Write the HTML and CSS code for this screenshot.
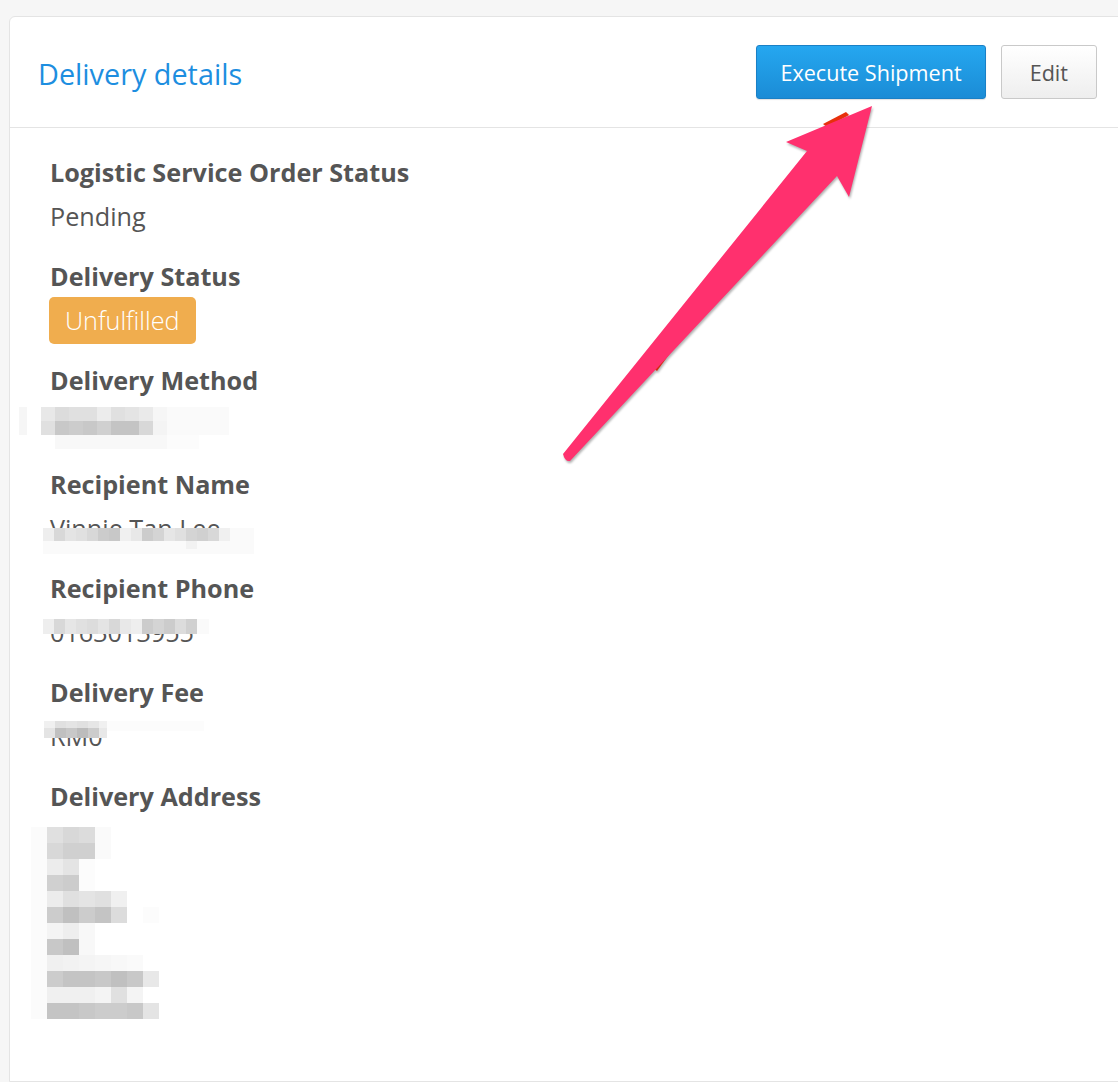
FILE: index.html
```html
<!DOCTYPE html>
<html>
<head lang="en">
    <meta charset="UTF-8">
    <title>Delivery details</title>
    <link rel="stylesheet" href="styles.css">
</head>
<body>
    <div class="panel">
        <div class="panel-heading">
            <h3 class="panel-title">Delivery details</h3>
            <div class="actions">
                <button class="btn btn-primary">Execute Shipment</button>
                <button class="btn btn-default">Edit</button>
            </div>
        </div>
        <div class="panel-body">
            <dl class="details">
                <div class="field">
                    <dt>Logistic Service Order Status</dt>
                    <dd>Pending</dd>
                </div>
                <div class="field">
                    <dt>Delivery Status</dt>
                    <dd class="status"><span class="label-warning">Unfulfilled</span></dd>
                </div>
                <div class="field">
                    <dt>Delivery Method</dt>
                    <dd class="redacted">
                        <!-- pixelated value -->
                        <svg class="mosaic mosaic-method" width="210" height="42" shape-rendering="crispEdges">
                            <rect x="0" y="0" width="8" height="28" fill="#f6f6f6"/>
                            <rect x="22" y="0" width="14" height="14" fill="#e8e8e8"/>
                            <rect x="36" y="0" width="14" height="14" fill="#dcdcdc"/>
                            <rect x="50" y="0" width="14" height="14" fill="#e0e0e0"/>
                            <rect x="64" y="0" width="14" height="14" fill="#e0e0e0"/>
                            <rect x="78" y="0" width="14" height="14" fill="#ececec"/>
                            <rect x="92" y="0" width="14" height="14" fill="#e0e0e0"/>
                            <rect x="106" y="0" width="14" height="14" fill="#e4e4e4"/>
                            <rect x="120" y="0" width="14" height="14" fill="#eaeaea"/>
                            <rect x="134" y="0" width="14" height="14" fill="#f6f6f6"/>
                            <rect x="148" y="0" width="62" height="14" fill="#fafafa"/>
                            <rect x="22" y="14" width="14" height="14" fill="#e0e0e0"/>
                            <rect x="36" y="14" width="14" height="14" fill="#c8c8c8"/>
                            <rect x="50" y="14" width="14" height="14" fill="#cccccc"/>
                            <rect x="64" y="14" width="14" height="14" fill="#c8c8c8"/>
                            <rect x="78" y="14" width="14" height="14" fill="#d0d0d0"/>
                            <rect x="92" y="14" width="14" height="14" fill="#c4c4c4"/>
                            <rect x="106" y="14" width="14" height="14" fill="#c4c4c4"/>
                            <rect x="120" y="14" width="14" height="14" fill="#d8d8d8"/>
                            <rect x="134" y="14" width="14" height="14" fill="#f4f4f4"/>
                            <rect x="148" y="14" width="62" height="14" fill="#fafafa"/>
                            <rect x="36" y="28" width="112" height="14" fill="#f8f8f8"/>
                            <rect x="148" y="28" width="32" height="14" fill="#fcfcfc"/>
                        </svg>
                    </dd>
                </div>
                <div class="field">
                    <dt>Recipient Name</dt>
                    <dd class="redacted">Vinnie Tan Lee
                        <svg class="mosaic mosaic-name" width="211" height="26" shape-rendering="crispEdges">
                            <rect x="0" y="0" width="11" height="13" fill="#eeeeee"/>
                            <rect x="11" y="0" width="11" height="13" fill="#d8d8d8"/>
                            <rect x="22" y="0" width="11" height="13" fill="#e4e4e4"/>
                            <rect x="33" y="0" width="11" height="13" fill="#e0e0e0"/>
                            <rect x="44" y="0" width="11" height="13" fill="#d8d8d8"/>
                            <rect x="55" y="0" width="11" height="13" fill="#cccccc"/>
                            <rect x="66" y="0" width="11" height="13" fill="#c8c8c8"/>
                            <rect x="77" y="0" width="11" height="13" fill="#f0f0f0"/>
                            <rect x="88" y="0" width="11" height="13" fill="#e8e8e8"/>
                            <rect x="99" y="0" width="11" height="13" fill="#cccccc"/>
                            <rect x="110" y="0" width="11" height="13" fill="#d4d4d4"/>
                            <rect x="121" y="0" width="11" height="13" fill="#e6e6e6"/>
                            <rect x="132" y="0" width="11" height="13" fill="#e0e0e0"/>
                            <rect x="143" y="0" width="11" height="13" fill="#d4d4d4"/>
                            <rect x="154" y="0" width="11" height="13" fill="#d0d0d0"/>
                            <rect x="165" y="0" width="11" height="13" fill="#d8d8d8"/>
                            <rect x="176" y="0" width="11" height="13" fill="#f0f0f0"/>
                            <rect x="187" y="0" width="24" height="13" fill="#fafafa"/>
                            <rect x="0" y="13" width="211" height="13" fill="#fafafa"/>
                            <rect x="143" y="13" width="11" height="8" fill="#f2f2f2"/>
                        </svg>
                    </dd>
                </div>
                <div class="field">
                    <dt>Recipient Phone</dt>
                    <dd class="redacted">0163013955
                        <svg class="mosaic mosaic-phone" width="166" height="15" shape-rendering="crispEdges">
                            <rect x="0" y="0" width="11" height="15" fill="#eeeeee"/>
                            <rect x="11" y="0" width="11" height="15" fill="#d8d8d8"/>
                            <rect x="22" y="0" width="11" height="15" fill="#e6e6e6"/>
                            <rect x="33" y="0" width="11" height="15" fill="#e0e0e0"/>
                            <rect x="44" y="0" width="11" height="15" fill="#dcdcdc"/>
                            <rect x="55" y="0" width="11" height="15" fill="#e4e4e4"/>
                            <rect x="66" y="0" width="11" height="15" fill="#d8d8d8"/>
                            <rect x="77" y="0" width="11" height="15" fill="#e8e8e8"/>
                            <rect x="88" y="0" width="11" height="15" fill="#eeeeee"/>
                            <rect x="99" y="0" width="11" height="15" fill="#cccccc"/>
                            <rect x="110" y="0" width="11" height="15" fill="#d4d4d4"/>
                            <rect x="121" y="0" width="11" height="15" fill="#cccccc"/>
                            <rect x="132" y="0" width="11" height="15" fill="#dcdcdc"/>
                            <rect x="143" y="0" width="11" height="15" fill="#d0d0d0"/>
                            <rect x="154" y="0" width="12" height="15" fill="#fafafa"/>
                        </svg>
                    </dd>
                </div>
                <div class="field">
                    <dt>Delivery Fee</dt>
                    <dd class="redacted">RM0
                        <svg class="mosaic mosaic-fee" width="160" height="17" shape-rendering="crispEdges">
                            <rect x="0" y="0" width="11" height="7" fill="#f0f0f0"/>
                            <rect x="11" y="0" width="11" height="7" fill="#e0e0e0"/>
                            <rect x="22" y="0" width="11" height="7" fill="#e4e4e4"/>
                            <rect x="33" y="0" width="11" height="7" fill="#e0e0e0"/>
                            <rect x="44" y="0" width="11" height="7" fill="#e6e6e6"/>
                            <rect x="55" y="0" width="8" height="7" fill="#f0f0f0"/>
                            <rect x="0" y="7" width="11" height="10" fill="#e4e4e4"/>
                            <rect x="11" y="7" width="11" height="10" fill="#c0c0c0"/>
                            <rect x="22" y="7" width="11" height="10" fill="#c8c8c8"/>
                            <rect x="33" y="7" width="11" height="10" fill="#bcbcbc"/>
                            <rect x="44" y="7" width="11" height="10" fill="#cccccc"/>
                            <rect x="55" y="7" width="8" height="10" fill="#e8e8e8"/>
                            <rect x="63" y="0" width="97" height="10" fill="#fcfcfc"/>
                        </svg>
                    </dd>
                </div>
                <div class="field">
                    <dt>Delivery Address</dt>
                    <dd class="redacted address">
                        <svg class="mosaic mosaic-address" width="130" height="192" shape-rendering="crispEdges">
                            <rect x="0" y="0" width="16" height="192" fill="#fbfbfb"/>
                            <!-- row 1 -->
                            <rect x="16" y="0" width="16" height="16" fill="#e0e0e0"/>
                            <rect x="32" y="0" width="16" height="16" fill="#d8d8d8"/>
                            <rect x="48" y="0" width="16" height="16" fill="#dcdcdc"/>
                            <rect x="64" y="0" width="16" height="32" fill="#fafafa"/>
                            <rect x="16" y="16" width="16" height="16" fill="#d8d8d8"/>
                            <rect x="32" y="16" width="16" height="16" fill="#d0d0d0"/>
                            <rect x="48" y="16" width="16" height="16" fill="#d0d0d0"/>
                            <!-- row 2 -->
                            <rect x="16" y="32" width="16" height="16" fill="#ececec"/>
                            <rect x="32" y="32" width="16" height="16" fill="#e4e4e4"/>
                            <rect x="48" y="32" width="16" height="32" fill="#fcfcfc"/>
                            <rect x="16" y="48" width="16" height="16" fill="#d0d0d0"/>
                            <rect x="32" y="48" width="16" height="16" fill="#cccccc"/>
                            <!-- row 3 -->
                            <rect x="16" y="64" width="16" height="16" fill="#ececec"/>
                            <rect x="32" y="64" width="16" height="16" fill="#e0e0e0"/>
                            <rect x="48" y="64" width="16" height="16" fill="#e4e4e4"/>
                            <rect x="64" y="64" width="16" height="16" fill="#e0e0e0"/>
                            <rect x="80" y="64" width="16" height="16" fill="#f0f0f0"/>
                            <rect x="16" y="80" width="16" height="16" fill="#cccccc"/>
                            <rect x="32" y="80" width="16" height="16" fill="#c0c0c0"/>
                            <rect x="48" y="80" width="16" height="16" fill="#cccccc"/>
                            <rect x="64" y="80" width="16" height="16" fill="#c4c4c4"/>
                            <rect x="80" y="80" width="16" height="16" fill="#dcdcdc"/>
                            <rect x="112" y="80" width="16" height="16" fill="#fcfcfc"/>
                            <!-- row 4 -->
                            <rect x="16" y="96" width="16" height="16" fill="#f4f4f4"/>
                            <rect x="32" y="96" width="16" height="16" fill="#eeeeee"/>
                            <rect x="48" y="96" width="16" height="32" fill="#f8f8f8"/>
                            <rect x="16" y="112" width="16" height="16" fill="#c8c8c8"/>
                            <rect x="32" y="112" width="16" height="16" fill="#c0c0c0"/>
                            <!-- row 5 -->
                            <rect x="16" y="128" width="16" height="16" fill="#f0f0f0"/>
                            <rect x="32" y="128" width="16" height="16" fill="#f2f2f2"/>
                            <rect x="48" y="128" width="16" height="16" fill="#f4f4f4"/>
                            <rect x="64" y="128" width="16" height="16" fill="#f6f6f6"/>
                            <rect x="80" y="128" width="16" height="16" fill="#f8f8f8"/>
                            <rect x="96" y="128" width="16" height="16" fill="#fafafa"/>
                            <rect x="16" y="144" width="16" height="16" fill="#cccccc"/>
                            <rect x="32" y="144" width="16" height="16" fill="#c4c4c4"/>
                            <rect x="48" y="144" width="16" height="16" fill="#c4c4c4"/>
                            <rect x="64" y="144" width="16" height="16" fill="#c8c8c8"/>
                            <rect x="80" y="144" width="16" height="16" fill="#c0c0c0"/>
                            <rect x="96" y="144" width="16" height="16" fill="#c8c8c8"/>
                            <rect x="112" y="144" width="16" height="16" fill="#e8e8e8"/>
                            <!-- row 6 -->
                            <rect x="16" y="160" width="16" height="16" fill="#f0f0f0"/>
                            <rect x="32" y="160" width="16" height="16" fill="#f0f0f0"/>
                            <rect x="48" y="160" width="16" height="16" fill="#f0f0f0"/>
                            <rect x="64" y="160" width="16" height="16" fill="#f4f4f4"/>
                            <rect x="80" y="160" width="16" height="16" fill="#e0e0e0"/>
                            <rect x="96" y="160" width="16" height="16" fill="#f4f4f4"/>
                            <rect x="16" y="176" width="16" height="16" fill="#c4c4c4"/>
                            <rect x="32" y="176" width="16" height="16" fill="#c4c4c4"/>
                            <rect x="48" y="176" width="16" height="16" fill="#c8c8c8"/>
                            <rect x="64" y="176" width="16" height="16" fill="#cccccc"/>
                            <rect x="80" y="176" width="16" height="16" fill="#cccccc"/>
                            <rect x="96" y="176" width="16" height="16" fill="#c8c8c8"/>
                            <rect x="112" y="176" width="16" height="16" fill="#e4e4e4"/>
                        </svg>
                    </dd>
                </div>
            </dl>
        </div>
    </div>

    <!-- callout arrow pointing at the primary action -->
    <svg class="callout" width="1118" height="1082">
        <polygon points="823,124 846,112 849,115 827,127" fill="#e8300c"/>
        <polygon points="653,368 675,338 679,341 657,371" fill="#d42a10"/>
        <path d="M563,454 L807,151 L786,142 L872,106 L849,197 L837,176 L570,461 Q565,462 563,454 Z" fill="#ff306e"/>
    </svg>
</body>
</html>
```

FILE: styles.css
```css
html, body {
    height: 100%;
    overflow: hidden;
}
body {
    margin: 0;
    padding: 16px 0 0 9px;
    box-sizing: border-box;
    background: #f6f6f6;
    font-family: "Open Sans", "Noto Sans", sans-serif;
    color: #555;
}
.panel {
    width: 1120px;
    height: 1066px;
    box-sizing: border-box;
    background: #fff;
    border: 1px solid #e4e4e4;
    border-radius: 6px 0 0 0;
}
.panel-heading {
    display: flex;
    align-items: center;
    justify-content: space-between;
    height: 110px;
    padding: 0 31px 0 28px;
    border-bottom: 1px solid #e4e4e4;
}
.panel-title {
    margin: 3px 0 0;
    font-size: 28.8px;
    font-weight: 400;
    color: #1d8ee0;
}
.actions {
    display: flex;
    gap: 15px;
}
.btn {
    height: 54px;
    font-family: inherit;
    font-size: 21.6px;
    border-radius: 3px;
    cursor: pointer;
}
.btn-primary {
    padding: 0 23px;
    color: #fff;
    background: linear-gradient(#25a7f0, #1b8cd6);
    border: 1px solid #1a80c6;
    box-shadow: 0 1px 1px rgba(0, 0, 0, .12);
}
.btn-default {
    padding: 0 28px;
    color: #555;
    background: linear-gradient(#fff, #eee);
    border: 1px solid #c9c9c9;
}
.panel-body {
    padding: 28px 40px;
}
.details {
    margin: 0;
}
.field {
    margin-bottom: 28px;
}
dt {
    font-size: 25.2px;
    font-weight: 700;
    line-height: 32px;
}
dd {
    margin: 12px 0 0;
    height: 32px;
    font-size: 25.2px;
    line-height: 32px;
}
.status {
    display: flex;
    align-items: center;
}
.label-warning {
    display: inline-block;
    height: 47px;
    line-height: 47px;
    padding: 0 16px;
    margin-left: -1px;
    font-size: 25.2px;
    font-weight: 300;
    color: #fff;
    background: #f0ad4e;
    border-radius: 5px;
}
/* 打码的字段 */
.redacted {
    position: relative;
}
.address {
    height: 196px;
}
.mosaic {
    position: absolute;
}
.mosaic-method { left: -31px; top: -1px; }
.mosaic-name { left: -7px; top: 16px; }
.mosaic-phone { left: -7px; top: 3px; }
.mosaic-fee { left: -6px; top: 1px; }
.mosaic-address { left: -19px; top: 3px; }
.callout {
    position: absolute;
    top: 0;
    left: 0;
    pointer-events: none;
    filter: drop-shadow(1px 2px 1px rgba(0, 0, 0, .3));
}
```
